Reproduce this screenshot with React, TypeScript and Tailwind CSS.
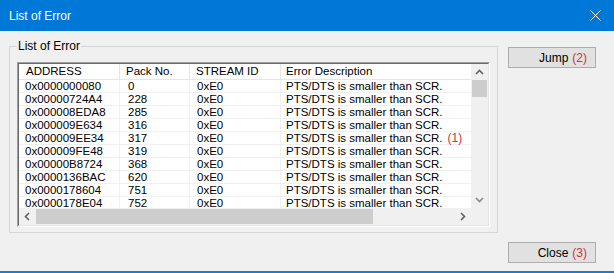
const rows = [
  ["0x0000000080", "0"],
  ["0x00000724A4", "228"],
  ["0x000008EDA8", "285"],
  ["0x000009E634", "316"],
  ["0x000009EE34", "317"],
  ["0x000009FE48", "319"],
  ["0x00000B8724", "368"],
  ["0x0000136BAC", "620"],
  ["0x0000178604", "751"],
  ["0x0000178E04", "752"],
]

function Chevron({ dir, color }: { dir: "up" | "down" | "left" | "right"; color: string }) {
  const pts = {
    up: "1,5 4.5,1.5 8,5",
    down: "1,2 4.5,5.5 8,2",
    left: "5,1 1.5,4.5 5,8",
    right: "2,1 5.5,4.5 2,8",
  }[dir]
  const vertical = dir === "up" || dir === "down"
  return (
    <svg width={vertical ? 9 : 7} height={vertical ? 7 : 9} viewBox={vertical ? "0 0 9 7" : "0 0 7 9"}>
      <polyline points={pts} fill="none" stroke={color} strokeWidth="1.6" />
    </svg>
  )
}

function Button({ label, num }: { label: string; num: string }) {
  return (
    <button className="w-[88px] h-[21px] bg-[#e1e1e1] border border-[#adadad] flex items-center justify-end pr-[8px] text-[12px] leading-none text-black">
      {label}
      <span className="ml-[4px] text-[#d3303a]">{num}</span>
    </button>
  )
}

export default function App() {
  return (
    <div
      className="w-[614px] h-[273px] bg-[#f0f0f0] flex flex-col border-b-2 border-[#1a7fd4] overflow-hidden"
      style={{ fontFamily: '"Liberation Sans", Arial, sans-serif' }}
    >
      <div className="h-[31px] bg-[#0078d7] flex items-center justify-between pl-[9px] pr-[13px] text-white text-[12px]">
        <span>List of Error</span>
        <svg width="11" height="11" viewBox="0 0 11 11">
          <path d="M0.5 0.5 L10.5 10.5 M10.5 0.5 L0.5 10.5" stroke="#fff" strokeWidth="1" />
        </svg>
      </div>

      <div className="flex-1 flex pl-[9px]">
        <fieldset className="w-[489px] h-[194px] mt-[8px] border border-[#d5d5d5] px-[7px] pt-[8px] pb-[5px]">
          <legend className="px-[1px] text-[12px] leading-[15px] text-black">List of Error</legend>

          <div className="border-t border-l border-[#a0a0a0] border-b border-r border-b-white border-r-white">
            <div className="border-t border-l border-[#696969] border-b border-r border-b-[#e3e3e3] border-r-[#e3e3e3] bg-white flex flex-col text-[11.5px] text-black">
              <div className="flex">
                <div className="w-[452px] flex flex-col">
                  <div className="h-[16px] flex border-b border-[#e5e5e5] leading-[15px]">
                    <div className="w-[101px] pl-[7px] border-r border-[#e5e5e5]">ADDRESS</div>
                    <div className="w-[70px] pl-[6px] border-r border-[#e5e5e5]">Pack No.</div>
                    <div className="w-[91px] pl-[6px] border-r border-[#e5e5e5]">STREAM ID</div>
                    <div className="flex-1 pl-[5px]">Error Description</div>
                  </div>
                  <div className="h-[128px] overflow-hidden">
                    {rows.map(([addr, pack], i) => (
                      <div key={addr} className="h-[13px] flex border-b border-[#f0f0f0] leading-[12px]">
                        <div className="w-[101px] pl-[6px] border-r border-[#f0f0f0]">{addr}</div>
                        <div className="w-[70px] pl-[8px] border-r border-[#f0f0f0]">{pack}</div>
                        <div className="w-[91px] pl-[7px] border-r border-[#f0f0f0]">0xE0</div>
                        <div className="flex-1 pl-[5px] whitespace-nowrap">
                          PTS/DTS is smaller than SCR.
                          {i === 4 && <span className="ml-[5px] text-[#d3303a] text-[12px]">(1)</span>}
                        </div>
                      </div>
                    ))}
                  </div>
                </div>
                <div className="w-[17px] bg-[#f0f0f0] flex flex-col items-center">
                  <div className="h-[16px] flex items-center justify-center">
                    <Chevron dir="up" color="#606060" />
                  </div>
                  <div className="w-[15px] h-[17px] bg-[#cdcdcd]" />
                  <div className="flex-1" />
                  <div className="h-[17px] flex items-center justify-center">
                    <Chevron dir="down" color="#8a8a8a" />
                  </div>
                </div>
              </div>
              <div className="h-[17px] flex bg-[#f0f0f0]">
                <div className="w-[17px] flex items-center justify-center">
                  <Chevron dir="left" color="#606060" />
                </div>
                <div className="w-[337px] h-[15px] mt-[1px] bg-[#cdcdcd]" />
                <div className="flex-1" />
                <div className="w-[17px] flex items-center justify-center">
                  <Chevron dir="right" color="#606060" />
                </div>
                <div className="w-[17px]" />
              </div>
            </div>
          </div>
        </fieldset>

        <div className="ml-[10px] flex flex-col justify-between pt-[16px] pb-[8px]">
          <Button label="Jump" num="(2)" />
          <Button label="Close" num="(3)" />
        </div>
      </div>
    </div>
  )
}
